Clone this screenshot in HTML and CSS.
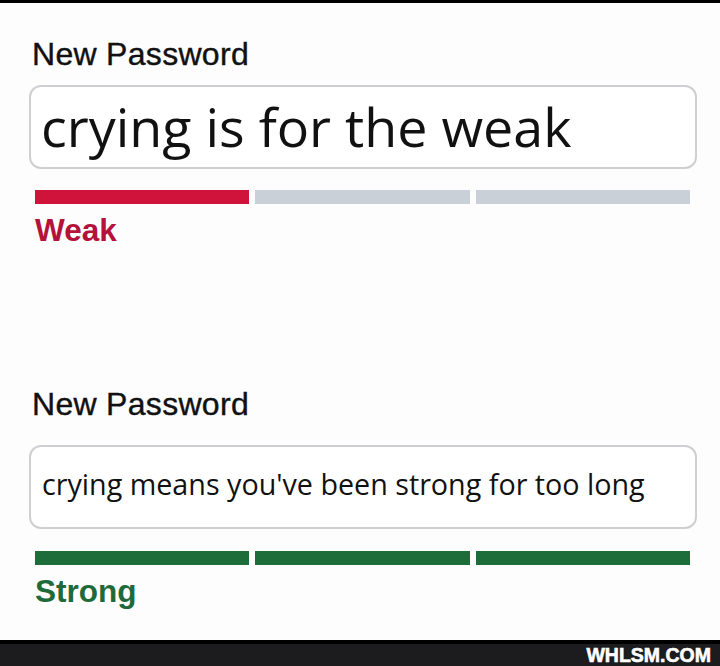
FILE: index.html
```
<!DOCTYPE html>
<html lang="en">
<head>
    <meta charset="UTF-8">
    <meta name="viewport" content="width=device-width, initial-scale=1.0">
    <title>New Password</title>
    <link rel="stylesheet" href="styles.css">
</head>
<body>
    <div class="page">
        <div class="field field-weak">
            <div class="field-label">New Password</div>
            <div class="field-input">crying is for the weak</div>
            <div class="meter">
                <span class="meter-bar on"></span>
                <span class="meter-bar"></span>
                <span class="meter-bar"></span>
            </div>
            <div class="strength">Weak</div>
        </div>

        <div class="field field-strong">
            <div class="field-label">New Password</div>
            <div class="field-input">crying means you've been strong for too long</div>
            <div class="meter">
                <span class="meter-bar on"></span>
                <span class="meter-bar on"></span>
                <span class="meter-bar on"></span>
            </div>
            <div class="strength">Strong</div>
        </div>
    </div>

    <div class="footer">WHLSM.COM</div>
</body>
</html>
```

FILE: styles.css
```
body {
    margin: 0;
    padding: 0;
    background-color: #fdfdfd;
    border-top: 3px solid #000;
    font-family: 'Liberation Sans', Arial, sans-serif;
    height: 663px;
    display: flex;
    flex-direction: column;
    overflow: hidden;
}

.page {
    flex: 1;
    padding: 0 23px 0 29px;
}

.field-label {
    margin-top: 33px;
    margin-left: 3px;
    font-size: 32px;
    line-height: 37px;
    letter-spacing: 0.3px;
    color: #111;
    -webkit-text-stroke: 0.4px #111;
}

.field-strong .field-label {
    margin-top: 138px;
}

.field-input {
    margin-top: 12px;
    border: 2px solid #cfcfd3;
    border-radius: 12px;
    background-color: #fff;
    font-family: 'Open Sans', sans-serif;
    color: #111;
    white-space: nowrap;
}

.field-weak .field-input {
    padding: 3px 10px 5px;
    font-size: 53.8px;
    line-height: 72px;
}

.field-strong .field-input {
    margin-top: 22px;
    padding: 18px 11px 24px;
    font-size: 28.7px;
    line-height: 38px;
}

.meter {
    display: flex;
    gap: 6px;
    margin: 22px 7px 0 6px;
}

.field-weak .meter {
    margin-top: 21px;
}

.meter-bar {
    flex: 1;
    height: 14px;
    background-color: #c9d0d8;
}

.field-weak .meter-bar.on {
    background-color: #d0133b;
}

.field-strong .meter-bar.on {
    background-color: #1d6d3b;
}

.strength {
    margin: 8px 0 0 6px;
    font-size: 31.5px;
    line-height: 36px;
    font-weight: bold;
}

.field-weak .strength {
    color: #b3133a;
}

.field-strong .strength {
    color: #1f6a3a;
}

.footer {
    height: 22px;
    border-top: 4px solid #000;
    background-color: #1c1c1e;
    color: #fff;
    font-weight: bold;
    font-size: 19.5px;
    line-height: 22px;
    text-align: right;
    padding-right: 9px;
    -webkit-text-stroke: 0.6px #fff;
}
```
